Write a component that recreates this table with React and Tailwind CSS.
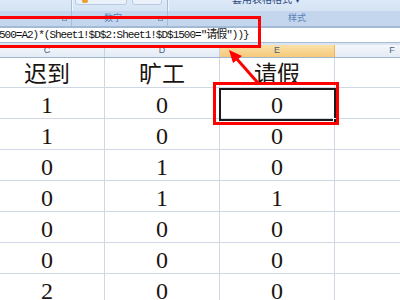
import React from "react";

const rows = [
  ["1", "0", "0"],
  ["1", "0", "0"],
  ["0", "1", "0"],
  ["0", "1", "1"],
  ["0", "0", "0"],
  ["0", "0", "0"],
  ["2", "0", "0"],
];

const serif = { fontFamily: '"Liberation Serif", "Noto Sans CJK SC", serif' };
const cjk = { fontFamily: '"Noto Sans CJK SC", sans-serif' };

function Cell({ children, font = serif, size = "text-[24px] pt-[3px]" }) {
  return (
    <div
      className={`w-[115px] shrink-0 border-r border-[#d0d7e5] flex items-center justify-center ${size} text-[#1b1512] leading-none`}
      style={font}
    >
      {children}
    </div>
  );
}

function Launcher() {
  return <div className="w-[5px] h-[5px] border border-[#7f9dc4] shrink-0" />;
}

function Group({ width, label, labelClass, launcher, children }) {
  return (
    <div className={`${width} shrink-0 flex flex-col border-r border-[#a7bdd8] shadow-[1px_0_0_#eef4fb]`}>
      <div className="h-[11px] flex gap-[5px] items-start overflow-hidden">{children}</div>
      <div className="h-[15px] bg-[#c3d6ee] flex items-center pr-[4px] text-[9px] text-[#5a7fb6]">
        <span className={`flex-1 whitespace-nowrap ${labelClass}`}>{label}</span>
        {launcher && <Launcher />}
      </div>
    </div>
  );
}

export default function App() {
  return (
    <div
      className="relative w-[400px] h-[300px] overflow-hidden bg-white"
      style={{ fontFamily: '"Liberation Sans", "Noto Sans CJK SC", sans-serif' }}
    >
      {/* ribbon */}
      <div className="flex h-[28px] bg-gradient-to-b from-[#dde9f7] to-[#cbdcf1] border-b-2 border-[#a3bad6] overflow-hidden">
        <div className="ml-[-40px] flex">
          <Group width="w-[112px]" label="对齐方式" labelClass="pl-[2px]" launcher />
          <Group width="w-[96px]" label="数字" labelClass="pl-[32px]" launcher>
            <div className="ml-[3px] mt-[-6px] w-[52px] h-[11px] rounded-[3px] border border-[#b7cbe3] bg-[#eaf1fa] flex items-end pl-[6px] pb-[1px]">
              <div className="w-[6px] h-[4px] bg-[#e8a030] rounded-sm" />
            </div>
            <div className="mt-[-6px] w-[30px] h-[11px] rounded-[3px] border border-[#b7cbe3] bg-[#eaf1fa]" />
          </Group>
          <Group width="w-[250px]" label="样式" labelClass="pl-[120px]">
            <span className="ml-[64px] mt-[-8px] text-[10px] text-[#2a4a80] whitespace-nowrap">套用表格格式 ▾</span>
          </Group>
        </div>
      </div>

      {/* formula bar */}
      <div className="h-[15px] bg-white border-b border-[#a9bcd5] flex items-center overflow-hidden whitespace-nowrap">
        <span
          className="ml-[-1px] text-[11px] tracking-[-1px] text-[#111]"
          style={{ fontFamily: '"Liberation Mono", "Noto Sans CJK SC", monospace' }}
        >
          500=A2)*(Sheet1!$D$2:Sheet1!$D$1500="请假"))&#125;
        </span>
      </div>
      <div className="h-[2px] bg-[#dbe5f1]" />

      {/* grid */}
      <div className="ml-[-10px] w-[470px]">
        <div className="flex h-[13px] border-b border-[#9eb6ce] bg-gradient-to-b from-[#f4f7fb] to-[#e4ebf5] text-[9px] text-[#4b5f7a]">
          <div className="w-[115px] shrink-0 border-r border-[#c5d2e3] flex items-center justify-center">C</div>
          <div className="w-[115px] shrink-0 border-r border-[#c5d2e3] flex items-center justify-center">D</div>
          <div className="w-[115px] shrink-0 border-r border-[#f2b655] bg-gradient-to-b from-[#fbe1a8] to-[#f5c979] flex items-center justify-center">E</div>
          <div className="w-[115px] shrink-0 border-r border-[#c5d2e3] flex items-center justify-center">F</div>
        </div>
        <div className="flex h-[30px] border-b border-[#d0d7e5]">
          <Cell font={cjk} size="text-[23px]">迟到</Cell>
          <Cell font={cjk} size="text-[23px]">旷工</Cell>
          <Cell font={cjk} size="text-[23px]">请假</Cell>
          <Cell />
        </div>
        {rows.map((r, i) => (
          <div key={i} className="flex h-[31px] border-b border-[#d0d7e5]">
            <Cell>{r[0]}</Cell>
            <Cell>{r[1]}</Cell>
            <Cell>{r[2]}</Cell>
            <Cell />
          </div>
        ))}
      </div>

      {/* selected cell */}
      <div className="absolute left-[219px] top-[88px] w-[117px] h-[33px] border-2 border-[#1a1a1a]">
        <div className="absolute right-[-4px] bottom-[-4px] w-[5px] h-[5px] bg-[#1a1a1a] border border-white" />
      </div>

      {/* red annotations */}
      <div className="absolute left-[-6px] top-[16px] w-[267px] h-[32px] border-[3px] border-[#ff0000]" />
      <div className="absolute left-[213px] top-[82px] w-[126px] h-[43px] border-[3px] border-[#ff0000]" />
      <svg className="absolute left-0 top-0" width="400" height="300">
        <line x1="258" y1="83" x2="236" y2="58" stroke="#ff0000" strokeWidth="3" />
        <polygon points="229,50 242,56 233,63" fill="#ff0000" />
      </svg>
    </div>
  );
}
